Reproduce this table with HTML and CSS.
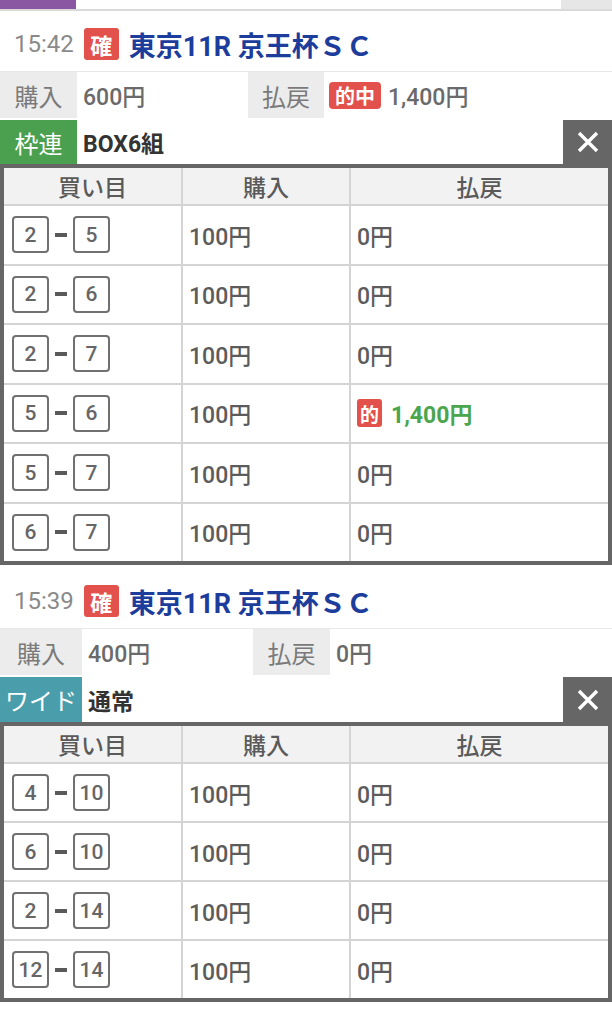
FILE: index.html
```html
<!DOCTYPE html>
<html lang="ja">
<head>
<meta charset="utf-8">
<title>購入履歴</title>
<link rel="stylesheet" href="styles.css">
</head>
<body>
<div class="tabs">
  <div class="tab tab-active"></div>
  <div class="tab tab-mid"></div>
  <div class="tab tab-end"></div>
</div>

<section class="ticket">
  <div class="race-head">
    <span class="time">15:42</span>
    <span class="badge">確</span>
    <span class="race">東京11R 京王杯ＳＣ</span>
  </div>
  <div class="sum-row">
    <div class="sum-label w77">購入</div>
    <div class="sum-val w171">600円</div>
    <div class="sum-label w76">払戻</div>
    <div class="sum-val grow"><span class="hit">的中</span>1,400円</div>
  </div>
  <div class="type-row">
    <div class="type-label green w77">枠連</div>
    <div class="type-val">BOX6組</div>
    <div class="close"><svg width="24" height="24" viewBox="0 0 24 24"><path d="M3 3L21 21M21 3L3 21" stroke="#fff" stroke-width="3.4"/></svg></div>
  </div>
  <div class="bets">
    <div class="th">買い目</div><div class="th">購入</div><div class="th">払戻</div>
    <div class="td"><span class="num">2</span><span class="dash"></span><span class="num">5</span></div><div class="td amt">100円</div><div class="td amt">0円</div>
    <div class="td"><span class="num">2</span><span class="dash"></span><span class="num">6</span></div><div class="td amt">100円</div><div class="td amt">0円</div>
    <div class="td"><span class="num">2</span><span class="dash"></span><span class="num">7</span></div><div class="td amt">100円</div><div class="td amt">0円</div>
    <div class="td"><span class="num">5</span><span class="dash"></span><span class="num">6</span></div><div class="td amt">100円</div><div class="td amt win"><span class="mini-hit">的</span>1,400円</div>
    <div class="td"><span class="num">5</span><span class="dash"></span><span class="num">7</span></div><div class="td amt">100円</div><div class="td amt">0円</div>
    <div class="td"><span class="num">6</span><span class="dash"></span><span class="num">7</span></div><div class="td amt">100円</div><div class="td amt">0円</div>
  </div>
</section>

<section class="ticket second">
  <div class="race-head">
    <span class="time">15:39</span>
    <span class="badge">確</span>
    <span class="race">東京11R 京王杯ＳＣ</span>
  </div>
  <div class="sum-row">
    <div class="sum-label w82">購入</div>
    <div class="sum-val w171">400円</div>
    <div class="sum-label w77">払戻</div>
    <div class="sum-val grow">0円</div>
  </div>
  <div class="type-row tall">
    <div class="type-label teal w82">ワイド</div>
    <div class="type-val">通常</div>
    <div class="close"><svg width="24" height="24" viewBox="0 0 24 24"><path d="M3 3L21 21M21 3L3 21" stroke="#fff" stroke-width="3.4"/></svg></div>
  </div>
  <div class="bets bets-short">
    <div class="th">買い目</div><div class="th">購入</div><div class="th">払戻</div>
    <div class="td"><span class="num">4</span><span class="dash"></span><span class="num">10</span></div><div class="td amt">100円</div><div class="td amt">0円</div>
    <div class="td"><span class="num">6</span><span class="dash"></span><span class="num">10</span></div><div class="td amt">100円</div><div class="td amt">0円</div>
    <div class="td"><span class="num">2</span><span class="dash"></span><span class="num">14</span></div><div class="td amt">100円</div><div class="td amt">0円</div>
    <div class="td"><span class="num">12</span><span class="dash"></span><span class="num">14</span></div><div class="td amt">100円</div><div class="td amt">0円</div>
  </div>
</section>
</body>
</html>
```

FILE: styles.css
```css
* { box-sizing: border-box; }

html, body {
  margin: 0;
  padding: 0;
  background: #fff;
  font-family: Roboto, "Noto Sans CJK JP", sans-serif;
  width: 612px;
}

.tabs {
  display: flex;
  height: 11px;
  border-bottom: 2px solid #d9d9d9;
}
.tab { height: 9px; }
.tab-active { width: 76px; background: #8a57a3; }
.tab-mid { flex: 1; background: #fff; }
.tab-end { width: 51px; background: #e6e6e6; }

.second { margin-top: 3px; }

.race-head {
  display: flex;
  align-items: center;
  height: 60px;
  padding: 6px 0 0 14px;
}
.time {
  font-size: 24px;
  color: #8a8a8a;
  margin-right: 10px;
}
.badge {
  width: 35px;
  height: 32px;
  background: #e2514b;
  color: #fff;
  border-radius: 3px;
  font-size: 22px;
  font-weight: 700;
  display: flex;
  align-items: center;
  justify-content: center;
  margin-right: 10px;
}
.race {
  font-size: 27px;
  font-weight: 700;
  color: #1c3d9b;
}

.sum-row {
  display: flex;
  height: 47px;
  border-top: 1px solid #e8e8e8;
  margin-bottom: 2px;
}
.sum-label {
  background: #ececec;
  color: #7a7a7a;
  font-size: 24px;
  display: flex;
  align-items: center;
  justify-content: center;
}
.sum-val {
  background: #fff;
  color: #6a6a6a;
  font-size: 23px;
  font-weight: 500;
  display: flex;
  align-items: center;
  padding-left: 6px;
}
.grow { flex: 1; }
.w77 { width: 77px; }
.w76 { width: 76px; }
.w82 { width: 82px; }
.w171 { width: 171px; }

.hit {
  background: #e2514b;
  color: #fff;
  font-size: 20px;
  font-weight: 700;
  border-radius: 4px;
  height: 27px;
  width: 52px;
  display: inline-flex;
  align-items: center;
  justify-content: center;
  margin: 0 7px 0 -1px;
}

.type-row {
  display: flex;
  height: 44px;
}
.type-row.tall { height: 45px; }
.type-label {
  color: #fff;
  font-size: 24px;
  display: flex;
  align-items: center;
  justify-content: center;
}
.green { background: #4ba04f; }
.teal { background: #4a9eac; }
.type-val {
  flex: 1;
  display: flex;
  align-items: center;
  padding-left: 6px;
  font-size: 23px;
  font-weight: 700;
  color: #333;
}
.close {
  width: 49px;
  background: #666;
  display: flex;
  align-items: center;
  justify-content: center;
}

.bets {
  display: grid;
  grid-template-columns: 177px 166px 1fr;
  grid-auto-rows: 57.5px;
  grid-template-rows: 36px;
  gap: 2px;
  background: #d4d4d4;
  border: 4px solid #666;
}
.bets-short { grid-auto-rows: 57px; }
.th {
  background: #f2f2f2;
  color: #5a5a5a;
  font-size: 23px;
  font-weight: 500;
  display: flex;
  align-items: center;
  justify-content: center;
}
.td {
  background: #fff;
  display: flex;
  align-items: center;
  padding-left: 8px;
}
.amt {
  font-size: 23px;
  font-weight: 500;
  color: #5c5c5c;
  padding-left: 6px;
}
.num {
  width: 37px;
  height: 37px;
  border: 2px solid #707070;
  border-radius: 4px;
  color: #666;
  font-size: 21px;
  font-weight: 500;
  display: flex;
  align-items: center;
  justify-content: center;
}
.dash {
  width: 12px;
  height: 4px;
  background: #5a5a5a;
  margin: 0 6px 0 6px;
}
.win {
  color: #4aa64c;
  font-weight: 700;
}
.mini-hit {
  background: #e2514b;
  color: #fff;
  font-size: 19px;
  font-weight: 700;
  width: 25px;
  height: 28px;
  border-radius: 3px;
  display: inline-flex;
  align-items: center;
  justify-content: center;
  margin-right: 9px;
}
```
